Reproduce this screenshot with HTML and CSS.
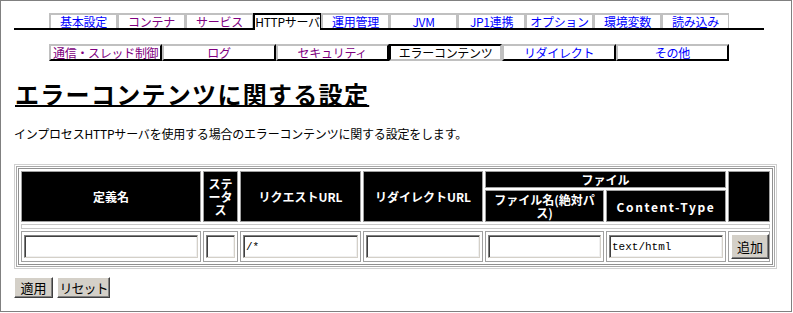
FILE: index.html
```html
<!DOCTYPE html>
<html lang="ja">
<head>
<meta charset="utf-8">
<title>エラーコンテンツに関する設定</title>
<link rel="stylesheet" href="styles.css">
</head>
<body>
<div class="frame">
  <nav class="tabbar">
    <a class="tab" href="#">基本設定</a>
    <a class="tab visited" href="#">コンテナ</a>
    <a class="tab visited" href="#">サービス</a>
    <span class="tab active">HTTPサーバ</span>
    <a class="tab" href="#">運用管理</a>
    <a class="tab" href="#">JVM</a>
    <a class="tab" href="#">JP1連携</a>
    <a class="tab" href="#">オプション</a>
    <a class="tab" href="#">環境変数</a>
    <a class="tab" href="#">読み込み</a>
  </nav>
  <nav class="subtabs">
    <a class="subtab visited" href="#">通信・スレッド制御</a>
    <a class="subtab visited" href="#">ログ</a>
    <a class="subtab visited" href="#">セキュリティ</a>
    <span class="subtab active">エラーコンテンツ</span>
    <a class="subtab" href="#">リダイレクト</a>
    <a class="subtab" href="#">その他</a>
  </nav>

  <h1 class="title">エラーコンテンツに関する設定</h1>
  <p class="desc">インプロセスHTTPサーバを使用する場合のエラーコンテンツに関する設定をします。</p>

  <div class="wrap1"><div class="wrap2">
    <table class="grid">
      <colgroup>
        <col class="c1"><col class="c2"><col class="c3"><col class="c4"><col class="c5"><col class="c6"><col class="c7">
      </colgroup>
      <thead>
        <tr class="h1row">
          <th rowspan="2">定義名</th>
          <th rowspan="2" class="status">ステータス</th>
          <th rowspan="2">リクエストURL</th>
          <th rowspan="2">リダイレクトURL</th>
          <th colspan="2">ファイル</th>
          <th rowspan="2"></th>
        </tr>
        <tr class="h2row">
          <th class="fname">ファイル名(絶対パス)</th>
          <th class="ctype">Content-Type</th>
        </tr>
      </thead>
      <tbody>
        <tr class="sep"><td colspan="7"></td></tr>
        <tr class="inrow">
          <td><input class="field" type="text" value=""></td>
          <td><input class="field" type="text" value=""></td>
          <td><input class="field mono" type="text" value="/*"></td>
          <td><input class="field" type="text" value=""></td>
          <td><input class="field" type="text" value=""></td>
          <td><input class="field mono" type="text" value="text/html"></td>
          <td class="btncell"><button class="btn add" type="button">追加</button></td>
        </tr>
      </tbody>
    </table>
  </div></div>

  <div class="actions">
    <button class="btn apply" type="button">適用</button>
    <button class="btn reset" type="button">リセット</button>
  </div>
</div>
</body>
</html>
```

FILE: styles.css
```css
html, body {
  margin: 0;
  padding: 0;
  background: #fff;
}
body {
  font-family: "Noto Sans CJK JP", "Noto Sans", sans-serif;
  font-size: 12px;
  color: #000;
}
.frame {
  box-sizing: border-box;
  width: 792px;
  height: 312px;
  border: 1px solid #808080;
  padding: 12px 0 0 13px;
}

/* top tabs */
.tabbar {
  width: 750px;
  display: flex;
  justify-content: center;
  border-bottom: 2px solid #000;
}
.tab {
  box-sizing: border-box;
  width: 68px;
  height: 15px;
  border-top: 2px solid #c0c0c0;
  border-left: 2px solid #c0c0c0;
  border-right: 1px solid #c0c0c0;
  text-align: center;
  line-height: 13px;
  font-size: 12px;
  color: #0000ff;
  text-decoration: none;
  white-space: nowrap;
  letter-spacing: -0.3px;
}
.tab.visited { color: #800080; }
.tab.active {
  height: 17px;
  margin-bottom: -2px;
  border: 2px solid #000;
  border-bottom: 0;
  border-right-width: 1px;
  background: #fff;
  color: #000;
}

/* sub tabs */
.subtabs {
  display: flex;
  width: 680px;
  margin: 14px 0 0 35px;
}
.subtab {
  flex: 1;
  box-sizing: border-box;
  height: 17px;
  border: 2px solid;
  border-color: #c0c0c0 #000 #000 #c0c0c0;
  text-align: center;
  line-height: 13px;
  color: #0000ff;
  text-decoration: none;
  white-space: nowrap;
  letter-spacing: -0.3px;
}
.subtab.visited { color: #800080; }
.subtab.active {
  border-color: #000 #c0c0c0 #c0c0c0 #000;
  color: #000;
}

/* heading */
.title {
  margin: 18px 0 0 1px;
  font-size: 24px;
  line-height: 30px;
  font-weight: bold;
  letter-spacing: 1.3px;
  text-decoration: underline;
  text-decoration-thickness: 2px;
}
.desc {
  margin: 17px 0 0 0;
  line-height: 16px;
  letter-spacing: -0.2px;
}

/* table */
.wrap1 {
  width: max-content;
  margin-top: 22px;
  border: 1px solid #d0d0d0;
  padding: 1px;
}
.wrap2 {
  border: 1px solid #a8a8a8;
  padding: 1px;
}
.grid {
  table-layout: fixed;
  border-collapse: separate;
  border-spacing: 2px;
  border: 1px solid #909090;
  width: 755px;
}
.c1 { width: 180px; }
.c2 { width: 35px; }
.c3 { width: 121px; }
.c4 { width: 120px; }
.c5 { width: 119px; }
.c6 { width: 120px; }
.c7 { width: 42px; }

.grid th {
  background: #000;
  color: #fff;
  font-weight: bold;
  border: 1px solid #a0a0a0;
  padding: 0 1px;
  font-size: 12px;
  line-height: 13px;
  text-align: center;
  vertical-align: middle;
}
.h1row { height: 17px; }
.h2row { height: 32px; }
.grid th.status {
  line-break: anywhere;
  word-break: break-all;
}
.grid th.ctype {
  letter-spacing: 1.6px;
}
.sep td {
  height: 3px;
  padding: 0;
  border: 1px solid #c8c8c8;
}
.inrow td {
  height: 30px;
  box-sizing: border-box;
  border: 1px solid #a0a0a0;
  padding: 2px;
  vertical-align: middle;
}
.field {
  display: block;
  box-sizing: border-box;
  width: 100%;
  height: 23px;
  margin: 0;
  padding: 0 2px;
  border: 1px solid;
  border-color: #808080 #d4d0c8 #d4d0c8 #808080;
  box-shadow: inset 1px 1px 0 #404040, inset -1px -1px 0 #f0f0f0;
  background: #fff;
  font-family: "Noto Sans CJK JP", sans-serif;
  font-size: 12px;
  outline: none;
}
.field.mono {
  font-family: "Liberation Mono", "DejaVu Sans Mono", monospace;
  font-size: 11px;
}
.btncell {
  text-align: center;
}

/* buttons */
.btn {
  box-sizing: border-box;
  height: 21px;
  margin: 0;
  padding: 0;
  background: #d4d0c8;
  border: 1px solid;
  border-color: #fff #404040 #404040 #fff;
  box-shadow: inset -1px -1px 0 #808080;
  font-family: "Noto Sans CJK JP", sans-serif;
  font-size: 13px;
  line-height: 17px;
  color: #000;
  text-align: center;
}
.btn.apply { width: 39px; }
.btn.reset { width: 53px; letter-spacing: -1px; }
.btn.add {
  width: 38px;
  height: 25px;
}
.actions {
  display: flex;
  gap: 4px;
  margin-top: 8px;
}
```
